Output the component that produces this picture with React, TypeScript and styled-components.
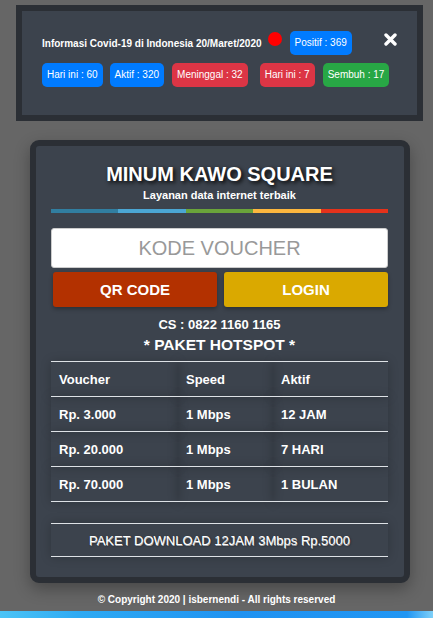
import styled, { createGlobalStyle } from 'styled-components';

const GlobalStyle = createGlobalStyle`
  html, body {
    margin: 0;
    padding: 0;
    background: #666666;
    font-family: "Liberation Sans", Arial, sans-serif;
    color: #fff;
  }
  * { box-sizing: border-box; }
`;

const Page = styled.div`
  min-height: 618px;
  display: flex;
  flex-direction: column;
  padding-top: 5px;
`;

const Notice = styled.section`
  margin: 0 10px 0 16px;
  border: 6px solid #2b2f35;
  background: #3c434d;
  padding: 20px 20px 28px 20px;
  display: flex;
  flex-direction: column;
  gap: 8px;
`;

const NoticeRow = styled.div<{ $gap?: number }>`
  display: flex;
  align-items: center;
  gap: ${(p) => p.$gap ?? 7}px;
  white-space: nowrap;
`;

const NoticeTitle = styled.span`
  font-size: 10px;
  font-weight: bold;
  color: #fff;
`;

const Dot = styled.span`
  flex: none;
  width: 14px;
  height: 14px;
  border-radius: 50%;
  background: #ff0000;
  margin: -8px 2px 0 0;
`;

const Badge = styled.span<{ $tone: 'blue' | 'red' | 'green'; $ml?: number }>`
  flex: none;
  display: inline-block;
  font-size: 10px;
  line-height: 12px;
  padding: 6px 5px;
  border-radius: 5px;
  color: #fff;
  margin-left: ${(p) => p.$ml ?? 0}px;
  background: ${(p) => (p.$tone === 'blue' ? '#007bff' : p.$tone === 'red' ? '#dc3545' : '#28a745')};
`;

const Close = styled.button`
  flex: none;
  margin-left: auto;
  margin-top: -8px;
  background: none;
  border: 0;
  padding: 0;
  width: 13px;
  height: 13px;
  cursor: pointer;
  display: flex;
`;

const Card = styled.main`
  margin: 19px 23px 0 30px;
  border: 6px solid #2b2f35;
  border-radius: 9px;
  background: #3c434d;
  padding: 16px 16px 20px 15px;
  box-shadow: 0 6px 16px rgba(0, 0, 0, 0.3);
  display: flex;
  flex-direction: column;
`;

const Title = styled.h1`
  margin: 0;
  font-size: 20px;
  line-height: 24px;
  font-weight: bold;
  text-align: center;
  text-shadow: 2px 2px 4px #000;
`;

const Subtitle = styled.div`
  margin-top: 3px;
  font-size: 11px;
  line-height: 13px;
  font-weight: bold;
  text-align: center;
`;

const ColorBar = styled.div`
  margin-top: 7px;
  height: 4px;
  display: grid;
  grid-template-columns: repeat(5, 1fr);
`;

const BarPart = styled.span<{ $c: string }>`
  background: ${(p) => p.$c};
`;

const VoucherInput = styled.input`
  margin-top: 15px;
  height: 40px;
  width: 100%;
  border: 1px solid #ccc;
  border-radius: 3px;
  background: #fff;
  text-align: center;
  font-family: "Liberation Sans", Arial, sans-serif;
  font-size: 20px;
  color: #555;
  outline: none;
  &::placeholder {
    color: #999;
  }
`;

const Buttons = styled.div`
  margin-top: 4px;
  padding-left: 2px;
  display: grid;
  grid-template-columns: 1fr 1fr;
  gap: 7px;
`;

const Btn = styled.button<{ $bg: string }>`
  height: 35px;
  border: 0;
  border-radius: 3px;
  background: ${(p) => p.$bg};
  color: #fff;
  font-family: "Liberation Sans", Arial, sans-serif;
  font-size: 15px;
  font-weight: bold;
  box-shadow: 0 2px 4px rgba(0, 0, 0, 0.3);
  cursor: pointer;
`;

const Cs = styled.div`
  margin-top: 10px;
  font-size: 13px;
  line-height: 15px;
  font-weight: bold;
  text-align: center;
`;

const Heading = styled.h2`
  margin: 3px 0 0;
  font-size: 15.5px;
  line-height: 19px;
  font-weight: bold;
  text-align: center;
`;

const Table = styled.table`
  margin-top: 7px;
  width: 100%;
  border-collapse: collapse;
  table-layout: fixed;
`;

const Cell = styled.td<{ $w?: number }>`
  width: ${(p) => (p.$w ? `${p.$w}px` : 'auto')};
  height: 35px;
  padding: 0 8px;
  font-size: 13px;
  font-weight: bold;
  text-align: left;
  border-top: 1px solid #dee2e6;
  box-shadow: 0 0 10px rgba(0, 0, 0, 0.22);
`;

const EndCell = styled.td`
  height: 0;
  padding: 0;
  border-top: 1px solid #dee2e6;
`;

const Download = styled.div`
  margin-top: 21px;
  height: 34px;
  border-top: 1px solid #dee2e6;
  border-bottom: 1px solid #dee2e6;
  display: flex;
  align-items: center;
  justify-content: center;
  font-size: 13px;
  text-shadow: 0.5px 0.5px 0 rgba(255, 255, 255, 0.6), 1px 1px 2px rgba(0, 0, 0, 0.6);
  box-shadow: 0 0 10px rgba(0, 0, 0, 0.22);
`;

const Footer = styled.footer`
  margin-top: 11px;
  font-size: 10px;
  line-height: 12px;
  font-weight: bold;
  text-align: center;
`;

const BlueBar = styled.div`
  margin-top: auto;
  height: 7px;
  background: linear-gradient(90deg, #4cc4f6 0%, #2eaaf3 18%, #1f92f1 55%, #2196f3 94%, #7fd0f8 100%);
`;

const rows = [
  ['Rp. 3.000', '1 Mbps', '12 JAM'],
  ['Rp. 20.000', '1 Mbps', '7 HARI'],
  ['Rp. 70.000', '1 Mbps', '1 BULAN'],
];

export default function App() {
  return (
    <Page>
      <GlobalStyle />
      <Notice>
        <NoticeRow $gap={6}>
          <NoticeTitle>Informasi Covid-19 di Indonesia 20/Maret/2020</NoticeTitle>
          <Dot />
          <Badge $tone="blue">Positif : 369</Badge>
          <Close aria-label="close">
            <svg width="13" height="13" viewBox="0 0 13 13">
              <path d="M2 2 L11 11 M11 2 L2 11" stroke="#fff" strokeWidth="3.4" strokeLinecap="round" />
            </svg>
          </Close>
        </NoticeRow>
        <NoticeRow>
          <Badge $tone="blue">Hari ini : 60</Badge>
          <Badge $tone="blue">Aktif : 320</Badge>
          <Badge $tone="red" $ml={1}>Meninggal : 32</Badge>
          <Badge $tone="red" $ml={5}>Hari ini : 7</Badge>
          <Badge $tone="green" $ml={1}>Sembuh : 17</Badge>
        </NoticeRow>
      </Notice>

      <Card>
        <Title>MINUM KAWO SQUARE</Title>
        <Subtitle>Layanan data internet terbaik</Subtitle>
        <ColorBar>
          <BarPart $c="#317ea0" />
          <BarPart $c="#4ba6d3" />
          <BarPart $c="#6aa43a" />
          <BarPart $c="#fdb73e" />
          <BarPart $c="#e5321b" />
        </ColorBar>
        <VoucherInput placeholder="KODE VOUCHER" />
        <Buttons>
          <Btn $bg="#b33100">QR CODE</Btn>
          <Btn $bg="#daa900">LOGIN</Btn>
        </Buttons>
        <Cs>CS : 0822 1160 1165</Cs>
        <Heading>* PAKET HOTSPOT *</Heading>
        <Table>
          <tbody>
            <tr>
              <Cell $w={127}>Voucher</Cell>
              <Cell $w={95}>Speed</Cell>
              <Cell>Aktif</Cell>
            </tr>
            {rows.map((r) => (
              <tr key={r[0]}>
                {r.map((c, i) => (
                  <Cell key={i}>{c}</Cell>
                ))}
              </tr>
            ))}
            <tr>
              <EndCell colSpan={3} />
            </tr>
          </tbody>
        </Table>
        <Download>PAKET DOWNLOAD 12JAM 3Mbps Rp.5000</Download>
      </Card>

      <Footer>© Copyright 2020 | isbernendi - All rights reserved</Footer>
      <BlueBar />
    </Page>
  );
}
